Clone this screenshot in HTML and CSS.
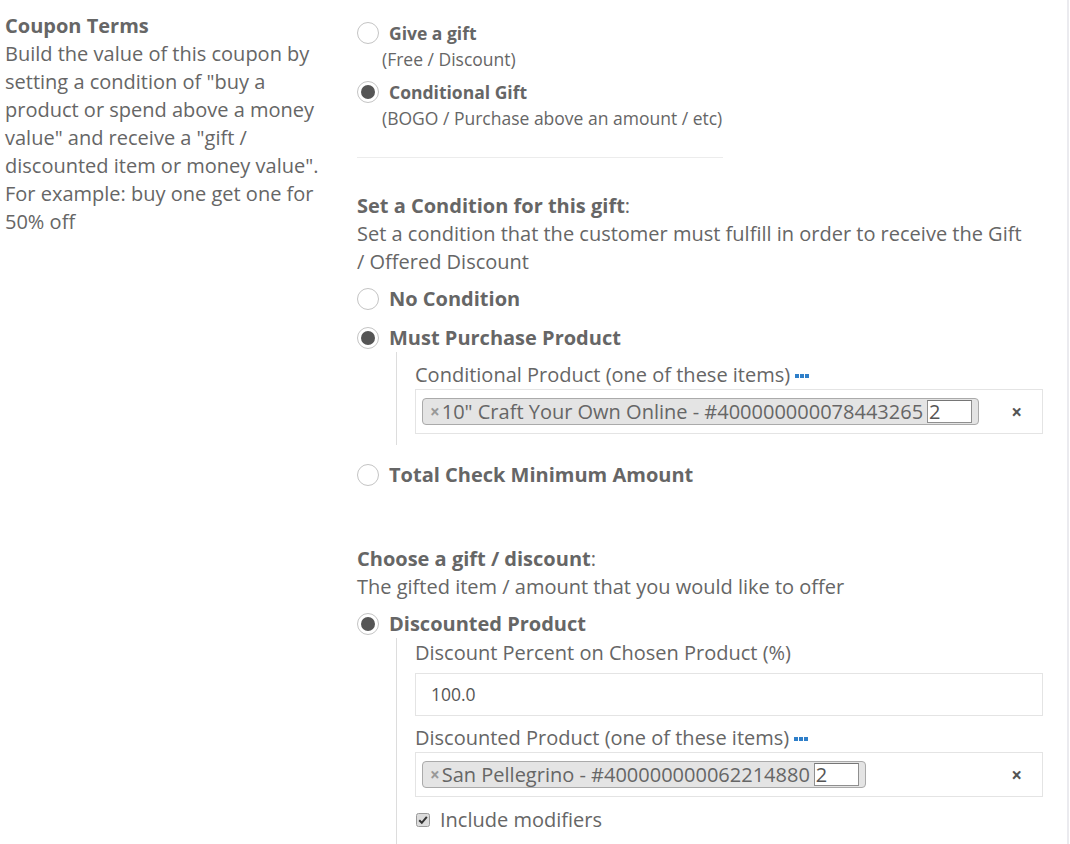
FILE: index.html
```html
<!DOCTYPE html>
<html>
<head>
<meta charset="utf-8">
<link rel="stylesheet" href="styles.css">
</head>
<body>
<div class="page">
  <div class="side">
    <div class="side-title">Coupon Terms</div>
    <div class="side-text">Build the value of this coupon by setting a condition of "buy a product or spend above a money value" and receive a "gift / discounted item or money value". For example: buy one get one for 50% off</div>
  </div>
  <div class="main">
    <div class="type-opt first">
      <div class="radio-row small"><span class="radio"></span><span class="radio-label">Give a gift</span></div>
      <div class="type-sub">(Free / Discount)</div>
    </div>
    <div class="type-opt">
      <div class="radio-row small"><span class="radio checked"></span><span class="radio-label">Conditional Gift</span></div>
      <div class="type-sub">(BOGO / Purchase above an amount / etc)</div>
    </div>
    <div class="divider"></div>

    <div class="section-title cond-title"><b>Set a Condition for this gift</b>:</div>
    <div class="section-desc">Set a condition that the customer must fulfill in order to receive the Gift / Offered Discount</div>

    <div class="radio-row big first-row"><span class="radio"></span><span class="radio-label">No Condition</span></div>
    <div class="radio-row big next-row"><span class="radio checked"></span><span class="radio-label">Must Purchase Product</span></div>
    <div class="nested nested-cond">
      <div class="field-label">Conditional Product (one of these items) <span class="dots"><i></i><i></i><i></i></span></div>
      <div class="select-box">
        <div class="tag"><span class="tag-x">×</span><span class="tag-text">10" Craft Your Own Online - #400000000078443265</span><span class="qty">2</span></div>
        <span class="clear-x">×</span>
      </div>
    </div>
    <div class="radio-row big total-row"><span class="radio"></span><span class="radio-label">Total Check Minimum Amount</span></div>

    <div class="section-title gift-title"><b>Choose a gift / discount</b>:</div>
    <div class="section-desc">The gifted item / amount that you would like to offer</div>
    <div class="radio-row big first-row"><span class="radio checked"></span><span class="radio-label">Discounted Product</span></div>
    <div class="nested nested-gift">
      <div class="field-label">Discount Percent on Chosen Product (%)</div>
      <div class="text-input">100.0</div>
      <div class="field-label label-gap">Discounted Product (one of these items) <span class="dots"><i></i><i></i><i></i></span></div>
      <div class="select-box">
        <div class="tag"><span class="tag-x">×</span><span class="tag-text">San Pellegrino - #400000000062214880</span><span class="qty">2</span></div>
        <span class="clear-x">×</span>
      </div>
      <div class="check-row">
        <svg class="check" width="14" height="14" viewBox="0 0 14 14"><rect x="0.5" y="0.5" width="13" height="13" rx="2" fill="#dcdcdc" stroke="#9a9a9a"/><path d="M3.2 7.2 L5.8 9.8 L10.8 3.8" fill="none" stroke="#333" stroke-width="2"/></svg>
        <span>Include modifiers</span>
      </div>
    </div>
  </div>
</div>
</body>
</html>
```
FILE: styles.css
```css
html, body {
  margin: 0;
  padding: 0;
  background: #fff;
}
body {
  font-family: "Open Sans", "DejaVu Sans", sans-serif;
  color: #666;
}
.page {
  display: grid;
  grid-template-columns: 357px 1fr;
  width: 1067px;
  min-height: 844px;
  border-right: 2px solid #ebebef;
}
.side {
  padding: 12px 0 0 5px;
  font-size: 20px;
  line-height: 28px;
}
.side-title {
  font-weight: 700;
}
.side-text {
  width: 330px;
}
.main {
  padding-top: 20px;
  font-size: 20px;
  line-height: 28px;
}
.radio-row {
  display: flex;
  align-items: center;
  gap: 10px;
  height: 28px;
}
.radio-row.small {
  height: 26px;
  font-size: 17.5px;
}
.radio-row.big {
  font-size: 20px;
}
.radio-label {
  font-weight: 700;
}
.radio {
  box-sizing: border-box;
  width: 22px;
  height: 22px;
  border-radius: 50%;
  border: 1px solid #c4c4c4;
  background: #fff;
  display: flex;
  align-items: center;
  justify-content: center;
  flex: none;
}
.radio.checked::after {
  content: "";
  width: 14px;
  height: 14px;
  border-radius: 50%;
  background: #555;
}
.type-opt {
  margin-bottom: 7px;
}
.type-sub {
  font-size: 17.5px;
  line-height: 26px;
  padding-left: 25px;
}
.divider {
  width: 366px;
  height: 1px;
  background: #ececec;
  margin-top: 26px;
}
.section-title {
  font-size: 20px;
}
.cond-title {
  margin-top: 34px;
}
.gift-title {
  margin-top: 56px;
}
.section-desc {
  width: 670px;
}
.first-row {
  margin-top: 9px;
}
.next-row {
  margin-top: 11px;
}
.total-row {
  margin-top: 16px;
}
.nested {
  margin-left: 39px;
  border-left: 1px solid #ddd;
  padding-left: 18px;
  width: 628px;
}
.nested-cond {
  padding-top: 9px;
  padding-bottom: 11px;
}
.nested-gift {
  padding-top: 1px;
  padding-bottom: 20px;
}
.field-label {
  display: flex;
  align-items: center;
  gap: 5px;
}
.label-gap {
  margin-top: 8px;
}
.dots {
  display: inline-flex;
  gap: 1px;
  margin-top: 2px;
}
.dots i {
  width: 4px;
  height: 4px;
  background: #2f7fc9;
}
.select-box {
  box-sizing: border-box;
  height: 45px;
  border: 1px solid #e4e4e4;
  display: flex;
  align-items: center;
  padding-left: 6px;
  position: relative;
}
.tag {
  box-sizing: border-box;
  height: 27px;
  display: flex;
  align-items: center;
  background: #e4e4e4;
  border: 1px solid #aaa;
  border-radius: 4px;
  padding: 0 6px 0 7px;
  font-size: 20px;
  line-height: 24px;
}
.tag-x {
  font-size: 17px;
  font-weight: 700;
  color: #999;
  margin-right: 2px;
}
.tag-text {
  white-space: nowrap;
}
.qty {
  box-sizing: border-box;
  width: 45px;
  height: 23px;
  margin-left: 4px;
  background: #fff;
  border: 1px solid #8f8f8f;
  border-top-color: #767676;
  line-height: 21px;
  padding-left: 1px;
  color: #555;
}
.clear-x {
  position: absolute;
  right: 20px;
  top: 8px;
  font-weight: 700;
  font-size: 19px;
  color: #555;
}
.text-input {
  box-sizing: border-box;
  height: 43px;
  margin-top: 6px;
  border: 1px solid #e4e4e4;
  padding-left: 15px;
  font-size: 17.5px;
  line-height: 41px;
  color: #555;
}
.check-row {
  display: flex;
  align-items: center;
  gap: 10px;
  margin-top: 9px;
  height: 28px;
}
.check {
  flex: none;
  margin-left: 1px;
}
```
